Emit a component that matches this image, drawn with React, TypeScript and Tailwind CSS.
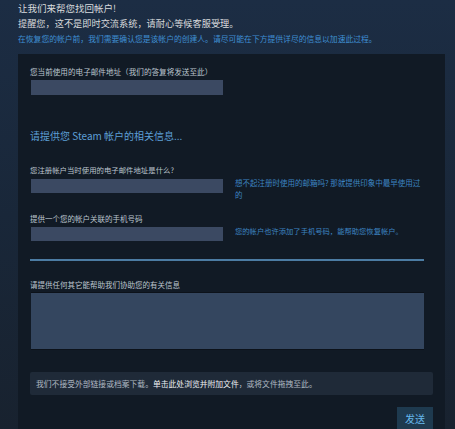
import { memo } from "react";

const cjk = { fontFamily: '"Noto Sans CJK SC", "Noto Sans", sans-serif' };

function Field({ className }: { className: string }) {
    return <div className={`ml-[1px] w-[192px] bg-[#3b4962] ${className}`} />;
}

function App() {
    return (
        <div
            style={cjk}
            className="w-[455px] h-[429px] overflow-hidden bg-gradient-to-b from-[#1c2d44] via-[#192739] to-[#18222f] flex flex-col"
        >
            {/* page header */}
            <div className="pl-[18px] pt-[1px]">
                <p className="text-[9.5px] leading-[15px] text-[#d9dbdd]">让我们来帮您找回帐户!</p>
                <p className="text-[9.2px] leading-[15px] text-[#d9dbdd]">提醒您，这不是即时交流系统，请耐心等候客服受理。</p>
                <p className="text-[7.8px] leading-[15px] text-[#3f8fd2]">
                    在恢复您的帐户前，我们需要确认您是该帐户的创建人。请尽可能在下方提供详尽的信息以加速此过程。
                </p>
            </div>

            {/* form panel */}
            <div className="ml-[18px] mt-[8px] w-[427px] flex-1 bg-[#111a25] pt-[13px] px-[12px] flex flex-col">
                <p className="text-[7.6px] leading-[10px] text-[#bcc5ce]">您当前使用的电子邮件地址（我们的答复将发送至此）</p>
                <Field className="mt-[3px] h-[15px]" />

                <p className="mt-[34px] text-[10px] leading-[14px] text-[#5d9fd6]">请提供您 Steam 帐户的相关信息...</p>

                <p className="mt-[22px] text-[7.4px] leading-[10px] text-[#bcc5ce]">您注册帐户当时使用的电子邮件地址是什么?</p>
                <div className="mt-[4px] flex items-start gap-[12px]">
                    <Field className="h-[14px] shrink-0" />
                    <p className="-mt-[2px] w-[186px] text-[7.5px] leading-[12px] text-[#3d85c2]">
                        想不起注册时使用的邮箱吗? 那就提供印象中最早使用过的
                    </p>
                </div>

                <p className="mt-[13px] text-[7.5px] leading-[10px] text-[#bcc5ce]">提供一个您的帐户关联的手机号码</p>
                <div className="mt-[3px] flex items-start gap-[12px]">
                    <Field className="h-[14px] shrink-0" />
                    <p className="-mt-[2px] text-[7.3px] leading-[12px] text-[#3d85c2]">
                        您的帐户也许添加了手机号码，能帮助您恢复帐户。
                    </p>
                </div>

                <div className="mt-[18px] w-[394px] h-[2px] bg-[#4c7ca3]" />

                <p className="mt-[19px] text-[7.5px] leading-[10px] text-[#bcc5ce]">请提供任何其它能帮助我们协助您的有关信息</p>
                <div className="mt-[2px] ml-[1px] w-[393px] h-[58px] bg-[#34465f] border-t border-b border-[#0c121a]" />

                <div className="mt-[22px] h-[23px] bg-[#1f2a38] rounded-[2px] px-[6px] flex items-center">
                    <p className="text-[7.8px] text-[#aeb8c2]">
                        我们不接受外部链接或档案下载。<span className="text-[#eef1f4]">单击此处浏览并附加文件</span>，或将文件拖拽至此。
                    </p>
                </div>

                <div className="mt-[12px] flex justify-end">
                    <button className="w-[36px] h-[22px] bg-[#1e3a4f] text-[10px] text-[#66b8ec] flex items-center justify-center">
                        发送
                    </button>
                </div>
            </div>
        </div>
    );
}

export default memo(App);
